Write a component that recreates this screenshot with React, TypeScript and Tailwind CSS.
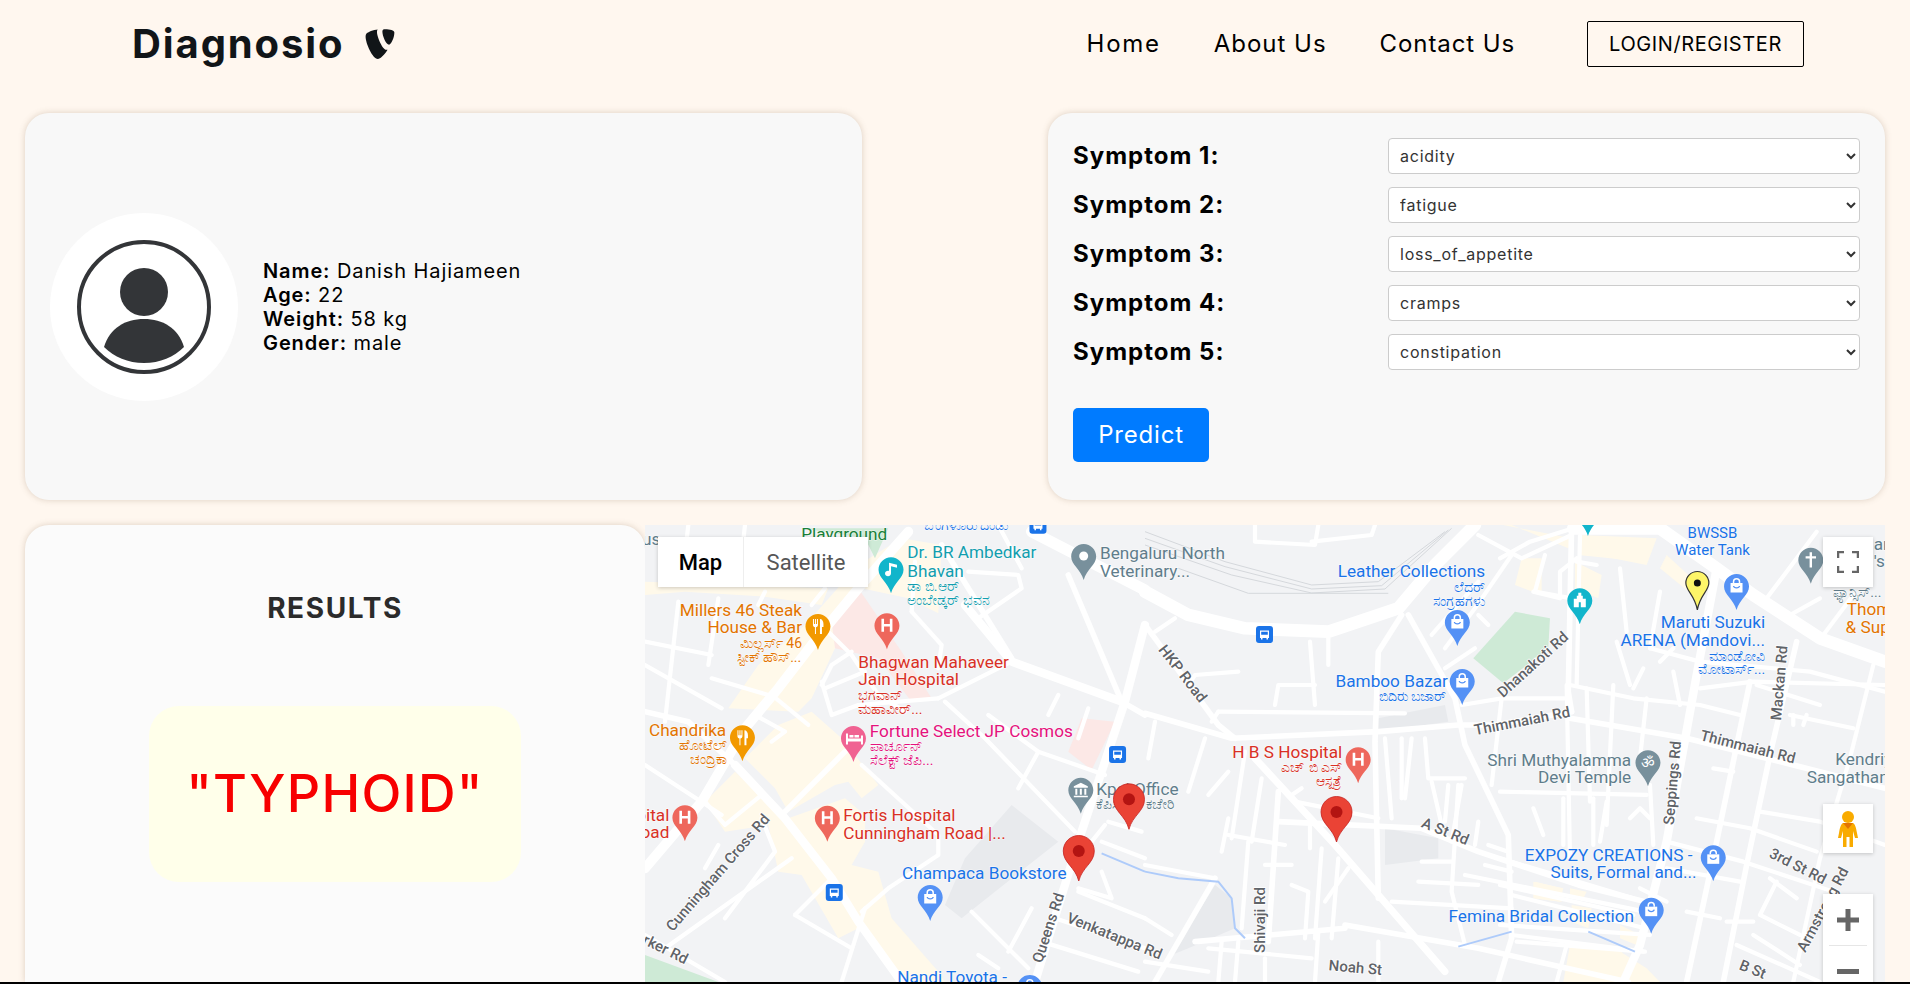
import { FaTypo3 } from 'react-icons/fa';

const MONT = "font-['Inter','Liberation_Sans',sans-serif]";

const symptoms = ['acidity', 'fatigue', 'loss_of_appetite', 'cramps', 'constipation'];

// labels and pins were measured in two squeezed zoom frames, converted to map coords here
const OFFSET = { L: 640 - 645, R: 1270 - 645 };
const px = (g: 'L' | 'R', x: number) => OFFSET[g] + x / 2.45;
const py = (y: number) => 520 - 525 + y / 3;

const COLORS = {
  blue: '#1a73e8',
  red: '#d93025',
  orange: '#e37400',
  teal: '#129eaf',
  slate: '#607d8b',
  pink: '#e5127d',
  green: '#188038',
  road: '#5f6368',
};

type Lbl = [('L' | 'R'), number, number, 'start' | 'end' | 'middle', keyof typeof COLORS, string, number?];

const labels: Lbl[] = [
  ['L', 395, 60, 'start', 'green', 'Playground'],
  ['L', 695, 30, 'start', 'blue', 'ಬೆಂಗಳೂರು ದಂಡು', 14],
  ['L', 50, 75, 'end', 'slate', 'Bus'],
  ['L', 655, 115, 'start', 'teal', 'Dr. BR Ambedkar'],
  ['L', 655, 170, 'start', 'teal', 'Bhavan'],
  ['L', 655, 212, 'start', 'teal', 'ಡಾ ಬಿ.ಆರ್', 14],
  ['L', 655, 255, 'start', 'teal', 'ಅಂಬೇಡ್ಕರ್ ಭವನ', 14],
  ['L', 1127, 118, 'start', 'slate', 'Bengaluru North'],
  ['L', 1127, 172, 'start', 'slate', 'Veterinary...'],
  ['L', 397, 287, 'end', 'orange', 'Millers 46 Steak'],
  ['L', 397, 340, 'end', 'orange', 'House & Bar'],
  ['L', 397, 385, 'end', 'orange', 'ಮಿಲ್ಲರ್ಸ್ 46', 14],
  ['L', 395, 425, 'end', 'orange', 'ಸ್ಟೀಕ್ ಹೌಸ್...', 14],
  ['L', 535, 443, 'start', 'red', 'Bhagwan Mahaveer'],
  ['L', 535, 496, 'start', 'red', 'Jain Hospital'],
  ['L', 535, 540, 'start', 'red', 'ಭಗವಾನ್', 14],
  ['L', 535, 582, 'start', 'red', 'ಮಹಾವೀರ್...', 14],
  ['L', 22, 648, 'start', 'orange', 'Chandrika'],
  ['L', 213, 690, 'end', 'orange', 'ಹೋಟೆಲ್', 14],
  ['L', 213, 733, 'end', 'orange', 'ಚಂದ್ರಿಕಾ', 14],
  ['L', 563, 651, 'start', 'pink', 'Fortune Select JP Cosmos'],
  ['L', 563, 692, 'start', 'pink', 'ಪಾರ್ಚೂನ್', 14],
  ['L', 563, 735, 'start', 'pink', 'ಸೆಲೆಕ್ಟ್ ಜೆಪಿ...', 14],
  ['L', 72, 902, 'end', 'red', 'Hospital'],
  ['L', 72, 955, 'end', 'red', 'Road'],
  ['L', 498, 904, 'start', 'red', 'Fortis Hospital'],
  ['L', 498, 957, 'start', 'red', 'Cunningham Road |...'],
  ['L', 1118, 825, 'start', 'slate', 'Kpcl Office'],
  ['L', 1118, 866, 'start', 'slate', 'ಕೆಪಿಸಿಎಲ್ ಕಚೇರಿ', 14],
  ['L', 642, 1077, 'start', 'blue', 'Champaca Bookstore'],
  ['L', 630, 1390, 'start', 'blue', 'Nandi Toyota -'],
  ['R', 1084, 55, 'middle', 'blue', 'BWSSB', 15],
  ['R', 1084, 105, 'middle', 'blue', 'Water Tank', 15],
  ['R', 527, 172, 'end', 'blue', 'Leather Collections'],
  ['R', 527, 215, 'end', 'blue', 'ಲೆದರ್', 14],
  ['R', 527, 257, 'end', 'blue', 'ಸಂಗ್ರಹಗಳು', 14],
  ['R', 436, 500, 'end', 'blue', 'Bamboo Bazar'],
  ['R', 432, 542, 'end', 'blue', 'ಬಿದಿರು ಬಜಾರ್', 14],
  ['R', 1213, 325, 'end', 'blue', 'Maruti Suzuki'],
  ['R', 1213, 378, 'end', 'blue', 'ARENA (Mandovi...'],
  ['R', 1213, 422, 'end', 'blue', 'ಮಾಂಡೋವಿ', 14],
  ['R', 1213, 463, 'end', 'blue', 'ಮೋಟಾರ್ಸ್...', 14],
  ['R', 177, 713, 'end', 'red', 'H B S Hospital'],
  ['R', 177, 755, 'end', 'red', 'ಎಚ್ ಬಿ ಎಸ್', 14],
  ['R', 177, 797, 'end', 'red', 'ಆಸ್ಪತ್ರೆ', 14],
  ['R', 885, 738, 'end', 'slate', 'Shri Muthyalamma'],
  ['R', 885, 790, 'end', 'slate', 'Devi Temple'],
  ['R', 1385, 736, 'start', 'slate', 'Kendriya'],
  ['R', 1315, 790, 'start', 'slate', 'Sangathan'],
  ['R', 1413, 285, 'start', 'orange', "Thom's"],
  ['R', 1410, 338, 'start', 'orange', '& Supermarket'],
  ['R', 1479, 90, 'start', 'slate', 'an'],
  ['R', 1479, 140, 'start', 'slate', "'s"],
  ['R', 1498, 230, 'end', 'slate', 'ಫ್ಯಾನ್ಸಿಸ್...', 14],
  ['R', 1035, 1022, 'end', 'blue', 'EXPOZY CREATIONS -'],
  ['R', 1045, 1075, 'end', 'blue', 'Suits, Formal and...'],
  ['R', 892, 1207, 'end', 'blue', 'Femina Bridal Collection'],
];

const roadNames: [('L' | 'R'), number, number, number, string][] = [
  ['L', 200, 1068, -49, 'Cunningham Cross Rd'],
  ['L', 1320, 470, 52, 'HKP Road'],
  ['L', 1012, 1228, -72, 'Queens Rd'],
  ['L', 1158, 1262, 22, 'Venkatappa Rd'],
  ['L', 1532, 1200, -90, 'Shivaji Rd'],
  ['L', 38, 1290, 26, 'Parker Rd'],
  ['R', 620, 618, -11, 'Thimmaiah Rd'],
  ['R', 1168, 695, 14, 'Thimmaiah Rd'],
  ['R', 652, 445, -42, 'Dhanakoti Rd'],
  ['R', 1260, 490, -85, 'Mackan Rd'],
  ['R', 998, 790, -85, 'Seppings Rd'],
  ['R', 425, 948, 22, 'A St Rd'],
  ['R', 1288, 1052, 27, '3rd St Rd'],
  ['R', 208, 1358, 5, 'Noah St'],
  ['R', 1178, 1362, 22, 'B St'],
  ['R', 1365, 1176, -62, 'Armstrong Rd'],
];

type Kind = 'hospital' | 'food' | 'music' | 'shop' | 'place' | 'gov' | 'hotel' | 'cross' | 'om' | 'museum';

const pins: [('L' | 'R'), number, number, Kind][] = [
  ['L', 615, 112, 'music'],
  ['L', 1087, 72, 'place'],
  ['L', 436, 282, 'food'],
  ['L', 605, 280, 'hospital'],
  ['L', 251, 616, 'food'],
  ['L', 523, 618, 'hotel'],
  ['L', 110, 856, 'hospital'],
  ['L', 459, 857, 'hospital'],
  ['L', 1080, 773, 'gov'],
  ['L', 711, 1095, 'shop'],
  ['L', 955, 1365, 'shop'],
  ['R', 459, 270, 'shop'],
  ['R', 471, 447, 'shop'],
  ['R', 759, 205, 'museum'],
  ['R', 779, -60, 'museum'],
  ['R', 1143, 162, 'shop'],
  ['R', 1325, 83, 'cross'],
  ['R', 216, 682, 'hospital'],
  ['R', 926, 691, 'om'],
  ['R', 1086, 976, 'shop'],
  ['R', 934, 1133, 'shop'],
];

const pinColor: Record<Kind, string> = {
  hospital: '#ee675c',
  food: '#f29900',
  music: '#12b5cb',
  shop: '#5491f5',
  place: '#78909c',
  gov: '#78909c',
  hotel: '#f06292',
  cross: '#78909c',
  om: '#78909c',
  museum: '#12b5cb',
};

function Glyph({ kind }: { kind: Kind }) {
  switch (kind) {
    case 'hospital':
      return <path d="M6.500 5.500h2.600v5.200h5.800V5.500h2.600v13h-2.600v-5.400H9.100v5.400H6.500z" fill="#fff" />;
    case 'food':
      return (
        <path
          d="M7 5h1v5h1V5h1v5h1V5h1v6c0 1.200-.8 2-2 2.200V20H9v-6.800C7.800 13 7 12.200 7 11zM14 5c2 0 3.500 2 3.500 5v3H16v7h-2z"
          fill="#fff"
        />
      );
    case 'music':
      return <path d="M10 5.500l8 2v3l-6-1.500v7c0 2-1.500 3-3 3s-3-1-3-2.800 1.500-2.800 3-2.800c.4 0 .7 0 1 .2z" fill="#fff" />;
    case 'shop':
      return (
        <g>
          <path d="M6 9h12v9.500H6z" fill="#fff" />
          <path d="M9 9V7.800a3 3 0 0 1 6 0V9" fill="none" stroke="#fff" strokeWidth="1.500" />
          <path d="M9 12c.5 2.600 5.500 2.600 6 0" fill="none" stroke="#5491f5" strokeWidth="1.300" />
        </g>
      );
    case 'place':
      return <circle cx="12" cy="12" r="4.500" fill="#fff" />;
    case 'gov':
      return (
        <path
          d="M12 5l7 3.500v1.500H5V8.500zM6.500 11h2v6h-2zM11 11h2v6h-2zM15.500 11h2v6h-2zM5 18h14v1.500H5z"
          fill="#fff"
        />
      );
    case 'hotel':
      return <path d="M4.500 7.500h2v5h13v-3h2v9h-2v-3h-13v3h-2zM8 9h4v2.500H8zM13 9h4.500v2.500H13z" fill="#fff" />;
    case 'cross':
      return <path d="M10.800 4.500h2.400v4h4v2.400h-4v9h-2.400v-9h-4V8.500h4z" fill="#fff" />;
    case 'om':
      return (
        <text x="12" y="18" textAnchor="middle" fontSize="15" fill="#fff" fontFamily="'DejaVu Sans', sans-serif">
          ॐ
        </text>
      );
    case 'museum':
      return <path d="M10.500 4.500h3v3h1.500v3h3v8.500H6v-8.500h3v-3h1.500zM11 14v5h2v-5z" fill="#fff" />;
  }
}

type Area = [string, string];
type Road = [number, string];
const BEIGE = '#fff9ea';
const PINK = '#fce8e6';
const GREEN = '#ceead6';
const GREY = '#e8eaed';

// three frames at true 3x, each with its x offset inside the map
const frames: { x: number; areas: Area[]; roads: Road[] }[] = [
  {
    x: 0,
    areas: [
      [BEIGE, '770,40 890,60 880,265 790,220 650,190 590,240 570,370 500,520 460,560 250,550 340,420 480,300 640,120'],
      [BEIGE, '0,170 550,190 530,240 360,215 120,200 0,210'],
      [BEIGE, '590,640 700,780 650,820 610,770 570,780 430,860 390,790 300,700 400,600 500,560'],
      [BEIGE, '180,830 270,740 420,880 560,1060 640,1210 580,1240 470,1050 400,1040 370,900 240,920'],
      [BEIGE, '430,880 600,820 660,870 660,950 620,1020 700,1040 740,1180 880,1340 900,1371 760,1371 640,1170 520,1000'],
      [PINK, '640,190 770,380 860,520 800,530 700,400 570,370 560,290'],
      [PINK, '1310,580 1410,590 1340,735 1270,680'],
      [GREEN, '470,10 730,10 690,100 660,40'],
      [GREEN, '0,1290 220,1371 0,1371'],
      [GREY, '1100,840 1240,950 1050,1100 950,1180 900,1140 960,1000'],
    ],
    roads: [
      [7, '790,20 640,190 500,360 400,490 300,610 170,830 0,1030'],
      [6, '270,720 420,880 560,1060 640,1190 770,1371'],
      [4, '0,560 130,590 270,720'],
      [3, '0,720 230,870'],
      [8, '1160,20 1500,195'],
      [6, '960,240 1100,410 1430,530'],
      [4, '890,60 1100,400'],
      [4, '1270,150 1430,530'],
      [6, '1500,300 1440,530 1300,950 1170,1371'],
      [4, '1430,530 1500,570'],
      [3, '880,520 1100,410'],
      [3, '900,530 1020,640 1290,920'],
      [3, '650,720 880,930 880,990 730,1090 650,1160'],
      [4, '600,680 420,860'],
      [3, '1030,570 1180,680 1380,750'],
      [3, '1180,680 1120,790'],
      [3, '1240,510 1210,570'],
      [3, '1330,550 1300,640'],
      [3, '800,260 890,360 880,430'],
      [3, '970,140 1120,150 1130,190 1000,280'],
      [3, '1060,0 1130,130'],
      [3, '100,230 60,590'],
      [3, '0,350 200,390'],
      [3, '220,220 190,420'],
      [3, '0,420 230,550'],
      [3, '200,460 370,510'],
      [3, '380,510 490,600'],
      [3, '330,570 420,620 380,650'],
      [3, '530,480 560,420 620,380'],
      [3, '530,470 560,570 640,540 880,520'],
      [3, '540,490 660,440'],
      [3, '550,320 620,390 700,510'],
      [3, '180,830 240,900 350,810 290,740'],
      [3, '220,960 180,1030'],
      [3, '350,880 390,980 240,1180'],
      [3, '0,1230 240,1371'],
      [3, '440,1000 60,1270'],
      [3, '450,1170 560,1060'],
      [3, '450,1170 620,1270'],
      [3, '980,1160 1150,1330'],
      [3, '1160,1150 1090,1280'],
      [3, '1300,1090 1400,1120 1370,1040'],
      [3, '1370,950 1500,1000'],
      [3, '1300,1100 1500,1180'],
      [3, '1230,1180 1500,1270'],
      [3, '1190,1250 1480,1340'],
      [3, '590,1371 660,1150'],
      [3, '1000,1290 1060,1330'],
      [3, '1390,890 1490,920'],
      [3, '1380,900 1340,950'],
      [3, '700,510 780,560'],
      [3, '300,0 280,180'],
      [3, '130,0 110,170'],
      [3, '360,200 340,240'],
      [3, '540,190 500,240'],
      [3, '810,110 800,260'],
    ],
  },
  {
    x: 500,
    areas: [
      [BEIGE, '1075,0 1280,40 1270,70 1100,0'],
      [BEIGE, '1130,100 1190,100 1190,210 1110,180'],
      [BEIGE, '1300,40 1500,40 1500,110 1300,90'],
      [BEIGE, '1290,110 1370,150 1360,220 1290,190'],
      [BEIGE, '1170,1070 1250,1090 1250,1130 1170,1120'],
      [BEIGE, '1280,1140 1340,1150 1330,1210 1280,1190'],
      [BEIGE, '1280,1250 1430,1280 1480,1371 1280,1371'],
      [GREEN, '1110,260 1215,280 1210,370 1075,475 985,400'],
      [GREY, '700,580 900,540 910,590 700,620'],
      [GREY, '720,910 880,940 880,1000 720,1020'],
      [GREY, '210,1080 260,1120 270,1210 130,1270 80,1290'],
    ],
    roads: [
      [9, '0,200 130,270 300,310 550,320 760,250 870,120 990,0'],
      [4, '0,300 30,340 220,600 270,640'],
      [3, '30,320 90,280'],
      [4, '0,565 260,640 700,620 940,600 1050,600 1280,560'],
      [5, '330,700 570,960 900,1340'],
      [3, '220,560 780,565'],
      [3, '220,560 200,590'],
      [4, '790,270 930,520 960,660 1090,930 1100,1240 1060,1371'],
      [4, '770,270 700,380 690,650 700,1120'],
      [3, '495,350 510,540'],
      [3, '550,340 550,420'],
      [3, '400,480 510,480 400,480 390,540'],
      [3, '130,480 150,450 280,440'],
      [3, '1100,90 990,250 900,370'],
      [3, '860,330 1000,170'],
      [3, '1000,270 1030,300'],
      [3, '900,430 990,370'],
      [3, '1000,30 1130,100 1280,30'],
      [4, '1280,0 1270,500 1280,560'],
      [3, '950,540 1070,520 1260,520'],
      [3, '1070,520 1040,780'],
      [3, '1200,90 1170,200 1280,220'],
      [4, '400,890 830,910 1000,980 1300,1080 1500,1130'],
      [3, '740,1130 1100,1150'],
      [3, '830,1010 920,1010'],
      [3, '820,1070 1000,1080'],
      [3, '940,780 920,1100 960,1260'],
      [3, '960,1050 1500,1160'],
      [3, '1100,1110 1500,1210'],
      [3, '1100,1230 1500,1280'],
      [4, '600,1200 1000,1270 1450,1371'],
      [4, '150,1250 600,1210'],
      [3, '0,1180 80,1230'],
      [4, '210,1060 30,1371'],
      [3, '0,1020 210,1060'],
      [3, '190,1270 500,1300'],
      [3, '0,1310 190,1340'],
      [3, '230,1250 220,1371'],
      [3, '280,1250 270,1371'],
      [3, '360,1300 360,1371'],
      [3, '520,1220 510,1371'],
      [3, '700,1250 700,1371'],
      [4, '400,800 370,1250'],
      [3, '310,950 290,1210'],
      [3, '300,680 260,940'],
      [3, '350,760 320,950'],
      [3, '230,980 250,880'],
      [3, '250,930 420,960'],
      [3, '360,1020 440,1020'],
      [3, '440,1080 490,1100 480,1240'],
      [3, '530,970 510,1240'],
      [3, '580,1000 560,1240'],
      [3, '540,1130 610,1030'],
      [3, '190,810 250,740'],
      [3, '440,810 470,790'],
      [3, '450,830 700,880'],
      [3, '495,900 495,970'],
      [3, '720,640 740,880'],
      [3, '770,640 770,820'],
      [3, '800,640 780,820'],
      [3, '840,640 850,760 960,760'],
      [3, '860,770 890,900'],
      [3, '910,780 900,890'],
      [3, '950,780 920,950'],
      [3, '1000,890 990,960'],
      [3, '180,640 130,800'],
      [3, '30,590 10,700'],
      [3, '330,0 330,50 510,60 520,0'],
      [3, '500,50 680,30 690,0'],
      [3, '1030,960 1090,980'],
      [3, '1020,1020 1100,1040'],
    ],
  },
  {
    x: 855,
    areas: [
      [BEIGE, '240,30 470,40 440,120 240,80'],
      [BEIGE, '500,90 620,200 590,220 480,130'],
      [BEIGE, '100,1070 190,1090 180,1130 100,1120'],
      [BEIGE, '210,1090 260,1100 250,1120 210,1110'],
      [BEIGE, '210,1260 360,1280 440,1330 480,1371 190,1371'],
      [BEIGE, '360,1200 420,1230 410,1260 360,1240'],
      [GREEN, '770,200 800,215 790,230 765,215'],
      [GREEN, '810,235 860,270 850,280 800,245'],
    ],
    roads: [
      [9, '220,10 480,10 650,130 760,210 960,340 1155,410'],
      [6, '650,130 590,450 500,950 420,1260 370,1371'],
      [4, '210,580 560,640 880,720 1155,790'],
      [4, '750,470 650,950 560,1371'],
      [4, '890,350 810,690 740,1020 670,1371'],
      [3, '1120,420 1050,700 960,1000 880,1371'],
      [3, '970,330 1060,210'],
      [3, '800,220 950,20'],
      [3, '960,220 870,270'],
      [3, '210,480 400,520 600,540 720,570'],
      [3, '600,490 760,470 1155,480'],
      [3, '450,370 600,410 930,440 1155,500'],
      [3, '770,480 960,540'],
      [3, '870,570 1060,610'],
      [3, '780,860 960,890 1155,960'],
      [3, '590,880 750,910 950,980'],
      [3, '500,950 730,1010 1000,1100'],
      [3, '500,1030 720,1070'],
      [3, '420,1090 500,1130'],
      [3, '660,1180 560,1160'],
      [3, '680,1190 760,1190'],
      [3, '810,1060 890,1120'],
      [3, '830,1070 780,1170 900,1230'],
      [3, '760,1230 900,1320'],
      [3, '710,1260 960,1371'],
      [3, '200,480 210,1000'],
      [3, '260,490 270,830'],
      [3, '340,480 320,900'],
      [3, '440,520 420,700'],
      [3, '0,800 440,810'],
      [3, '100,850 130,930'],
      [3, '190,820 190,960'],
      [3, '280,820 280,960'],
      [3, '320,830 300,950'],
      [3, '450,780 460,960'],
      [3, '390,880 420,850 450,880'],
      [3, '640,730 700,740'],
      [3, '880,570 880,600'],
      [3, '920,570 910,600'],
      [3, '0,1000 400,1120'],
      [3, '0,1080 400,1170'],
      [3, '50,1250 430,1280'],
      [3, '200,1260 170,1371'],
      [3, '0,1200 450,1230'],
      [3, '240,30 230,480'],
      [3, '230,110 290,120'],
      [3, '100,200 180,220 180,140 230,100'],
      [3, '360,130 380,320'],
      [3, '480,200 450,370'],
      [3, '350,350 390,480'],
      [3, '430,430 400,490'],
      [3, '480,410 520,370'],
      [3, '520,440 540,540'],
      [3, '0,100 90,50 220,10'],
    ],
  },
];

const water = ['1370,985 1500,1040'];
const waterB = ['0,1040 100,1060 220,1070 260,1120 270,1210 300,1240', '940,1265 1100,1220', '1330,1220 1470,1280'];
const rails = [
  '0,20 240,110 500,180 700,170 900,20',
  '0,40 240,125 500,192 710,182 910,15',
  '0,60 260,150 500,204 720,192 920,10',
  '100,130 310,205 730,205',
];

function MapCanvas() {
  return (
    <svg
      viewBox="0 0 1240 457"
      className="absolute inset-0 h-full w-full"
      style={{ fontFamily: "Roboto, 'Noto Sans', sans-serif" }}
    >
      <rect width="1240" height="457" fill="#f2f3f5" />
      {frames.map((f) => (
        <g key={f.x} transform={`translate(${f.x} 0) scale(0.3333)`}>
          {f.areas.map(([fill, pts], i) => (
            <polygon key={i} points={pts} fill={fill} />
          ))}
        </g>
      ))}
      {frames.map((f) => (
        <g key={f.x} transform={`translate(${f.x} 0) scale(0.3333)`} fill="none" strokeLinejoin="round" strokeLinecap="round">
          {f.roads.map(([w, pts], i) => (
            <polyline key={i} points={pts} stroke="#fff" strokeWidth={w * 1.4} vectorEffect="non-scaling-stroke" />
          ))}
        </g>
      ))}
      <g transform="scale(0.3333)" fill="none">
        {water.map((pts) => (
          <polyline key={pts} points={pts} stroke="#aecbfa" strokeWidth="2" vectorEffect="non-scaling-stroke" />
        ))}
      </g>
      <g transform="translate(500 0) scale(0.3333)" fill="none">
        {waterB.map((pts) => (
          <polyline key={pts} points={pts} stroke="#aecbfa" strokeWidth="2" vectorEffect="non-scaling-stroke" />
        ))}
        {rails.map((pts) => (
          <polyline key={pts} points={pts} stroke="#d5d8dc" strokeWidth="1" vectorEffect="non-scaling-stroke" />
        ))}
      </g>

      {pins.map(([g, x, y, kind], i) => (
        <g key={i} transform={`translate(${px(g, x) - 12.5} ${py(y)})`}>
          <path
            d="M12.500 0C5.600 0 0 5.600 0 12.500C0 21 9.500 25 12.500 36C15.500 25 25 21 25 12.500C25 5.600 19.400 0 12.500 0Z"
            fill={pinColor[kind]}
          />
          <g transform="translate(.5 0)">
            <Glyph kind={kind} />
          </g>
        </g>
      ))}

      {[
        ['L', 1530, 318],
        ['L', 1170, 678],
        ['L', 476, 1092],
        ['L', 975, -10],
      ].map(([g, x, y], i) => (
        <g key={i} transform={`translate(${px(g as 'L', x as number) - 8.5} ${py(y as number)})`}>
          <rect width="17" height="17" rx="3" fill="#1a73e8" />
          <path d="M4 4.500h9v7.500h-1v1.500h-1.500V12h-4v1.500H5V12H4zM5.200 5.800v3h6.600v-3z" fill="#fff" fillRule="evenodd" />
        </g>
      ))}

      {labels.map(([g, x, y, anchor, color, text, size], i) => (
        <text
          key={i}
          x={px(g, x)}
          y={py(y)}
          textAnchor={anchor}
          fontSize={size ?? 17.2}
          fill={COLORS[color]}
          stroke="#fff"
          strokeOpacity="0.5"
          strokeWidth="1.500"
          paintOrder="stroke"
        >
          {text}
        </text>
      ))}

      {roadNames.map(([g, x, y, rot, text], i) => (
        <text
          key={i}
          transform={`translate(${px(g, x)} ${py(y)}) rotate(${rot})`}
          textAnchor="middle"
          fontSize="15"
          fontWeight="500"
          fill={COLORS.road}
          stroke="#fff"
          strokeWidth="1.500"
          paintOrder="stroke"
        >
          {text}
        </text>
      ))}

      {/* red markers */}
      {[
        [px('L', 1198), py(790)],
        [px('L', 1075), py(945)],
        [px('R', 163), py(828)],
      ].map(([x, y], i) => (
        <g key={i} transform={`translate(${x - 16} ${y})`}>
          <path
            d="M16 .5C7.400 .5 .5 7.400 .5 16C.5 28 12.500 32 16 46C19.500 32 31.500 28 31.500 16C31.500 7.400 24.600 .5 16 .5Z"
            fill="#ea4335"
            stroke="#c5221f"
            strokeWidth=".8"
          />
          <circle cx="16" cy="16" r="6" fill="#b31412" />
        </g>
      ))}
      <g transform={`translate(${px('R', 1047) - 12} ${py(153)})`}>
        <path
          d="M12 .5C5.600 .5 .5 5.600 .5 12C.5 20 9.500 24 12 39C14.500 24 23.500 20 23.500 12C23.500 5.600 18.400 .5 12 .5Z"
          fill="#fdf569"
          stroke="#333"
          strokeWidth="1.200"
        />
        <circle cx="12" cy="12" r="3.500" fill="#111" />
      </g>
    </svg>
  );
}

function MapControls() {
  return (
    <>
      <div className="absolute left-[13px] top-[12px] flex h-[50px] bg-white text-[22px] font-['Roboto',sans-serif] shadow-[0_1px_4px_rgba(0,0,0,0.2)]">
        <div className="flex w-[86px] items-center justify-center border-r border-[#eee] font-medium text-black">Map</div>
        <div className="flex w-[124px] items-center justify-center text-[#565656]">Satellite</div>
      </div>
      <div className="absolute right-[12px] top-[12px] flex h-[50px] w-[50px] items-center justify-center bg-white shadow-[0_1px_4px_rgba(0,0,0,0.2)]">
        <svg width="22" height="22" viewBox="0 0 22 22" fill="none" stroke="#666" strokeWidth="2.500">
          <path d="M1 7V1h6M15 1h6v6M21 15v6h-6M7 21H1v-6" />
        </svg>
      </div>
      <div className="absolute right-[12px] top-[279px] flex h-[49px] w-[50px] items-center justify-center bg-white shadow-[0_1px_4px_rgba(0,0,0,0.2)]">
        <svg width="22" height="38" viewBox="0 0 22 38">
          <circle cx="11" cy="7" r="6" fill="#f9ab00" />
          <path d="M6 13h10c2 1 3 4 4 10l1 5h-3l-2-7v16h-3.500V27h-3v10H6V21l-2 7H1l1-5c1-6 2-9 4-10z" fill="#f9ab00" />
          <path d="M6 13l5 6 5-6z" fill="#e37400" />
        </svg>
      </div>
      <div className="absolute right-[12px] top-[369px] flex h-[110px] w-[50px] flex-col items-center bg-white shadow-[0_1px_4px_rgba(0,0,0,0.2)]">
        <div className="flex h-[51px] w-full items-center justify-center">
          <svg width="22" height="22" viewBox="0 0 22 22" fill="#666">
            <path d="M8.500 0h5v8.500H22v5h-8.500V22h-5v-8.500H0v-5h8.500z" />
          </svg>
        </div>
        <div className="h-px w-[38px] bg-[#e6e6e6]" />
        <div className="flex h-[51px] w-full items-center justify-center">
          <div className="h-[5px] w-[22px] bg-[#666]" />
        </div>
      </div>
    </>
  );
}

export default function App() {
  return (
    <div className={`flex h-[984px] flex-col overflow-hidden bg-[#fff7ef] text-black ${MONT}`}>
      <nav className="flex h-[113px] shrink-0 items-start justify-between pl-[132px] pr-[106px]">
        <div className="flex h-[88px] items-center">
          <span className="text-[40px] font-bold tracking-[1.9px] text-[#111518]">Diagnosio</span>
          <FaTypo3 className="ml-[20px] h-[34px] w-[30px] text-[#111518]" />
        </div>
        <div className="flex h-[88px] items-center">
          <a className="text-[24px] tracking-[1.7px]">Home</a>
          <a className="ml-[53px] text-[24px] tracking-[1px]">About Us</a>
          <a className="ml-[53px] text-[24px] tracking-[0.9px]">Contact Us</a>
          <button className="ml-[72px] h-[46px] w-[217px] rounded-[2px] border border-black text-[20px] tracking-[0.6px]">
            LOGIN/REGISTER
          </button>
        </div>
      </nav>

      <div className="flex shrink-0 justify-between px-[25px]">
        <section className="flex h-[387px] w-[837px] items-center gap-[25px] rounded-[24px] bg-[#f8f8f8] pl-[25px] shadow-[0_0_6px_rgba(120,90,60,0.25)]">
          <div className="flex h-[188px] w-[188px] items-center justify-center rounded-full bg-white">
            <svg width="134" height="134" viewBox="0 0 134 134">
              <circle cx="67" cy="67" r="65" fill="none" stroke="#333538" strokeWidth="4" />
              <circle cx="67" cy="52" r="24" fill="#333538" />
              <path d="M27 107C33 88 48 79 67 79C86 79 101 88 107 107C97 117 83 123 67 123C51 123 37 117 27 107Z" fill="#333538" />
            </svg>
          </div>
          <div className="text-[20px] leading-[24px] tracking-[0.9px]">
            <div><b className="font-semibold">Name:</b> Danish Hajiameen</div>
            <div><b className="font-semibold">Age:</b> 22</div>
            <div><b className="font-semibold">Weight:</b> 58 kg</div>
            <div><b className="font-semibold">Gender:</b> male</div>
          </div>
        </section>

        <section className="h-[387px] w-[837px] rounded-[24px] bg-[#f8f8f8] px-[25px] pt-[25px] shadow-[0_0_6px_rgba(120,90,60,0.25)]">
          <div className="flex flex-col gap-[13px]">
            {symptoms.map((s, i) => (
              <div key={s} className="flex h-[36px] items-center">
                <label className="w-[315px] text-[24px] font-bold tracking-[1px]">Symptom {i + 1}:</label>
                <select
                  defaultValue={s}
                  className="h-[36px] w-[472px] rounded-[4px] border border-[#ccc] bg-white pl-[7px] text-[16px] tracking-[0.75px] text-[#333]"
                >
                  <option value={s}>{s}</option>
                </select>
              </div>
            ))}
          </div>
          <button className="mt-[38px] h-[54px] w-[136px] rounded-[5px] bg-[#007bff] text-[24px] tracking-[0.8px] text-white">
            Predict
          </button>
        </section>
      </div>

      <div className="mt-[25px] flex min-h-0 flex-1 px-[25px]">
        <section className="flex w-[620px] shrink-0 flex-col items-center rounded-t-[24px] bg-[#fbfbfb] shadow-[0_0_6px_rgba(120,90,60,0.25)]">
          <h2 className="mt-[65px] text-[28px] font-bold leading-[36px] tracking-[1.6px] text-[#2b2b2b]">RESULTS</h2>
          <div className="mt-[80px] flex h-[176px] w-[372px] items-center justify-center rounded-[30px] bg-[#ffffea]">
            <span className="text-[52px] font-medium tracking-[1.3px] text-[#f70000]">"TYPHOID"</span>
          </div>
        </section>
        <div className="relative flex-1 overflow-hidden">
          <MapCanvas />
          <MapControls />
        </div>
      </div>
      <div className="h-[2px] shrink-0 bg-black" />
    </div>
  );
}
